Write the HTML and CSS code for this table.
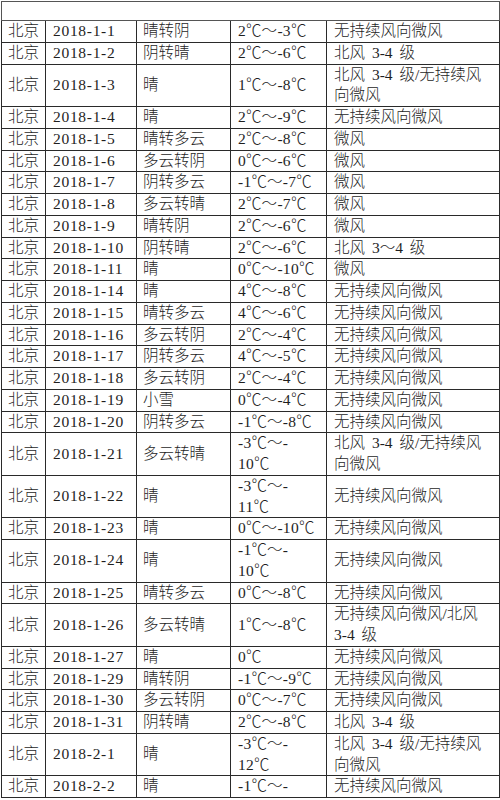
FILE: index.html
```html
<!DOCTYPE html>
<html lang="zh">
<head>
<meta charset="utf-8">
<title>北京天气</title>
<link rel="stylesheet" href="styles.css">
</head>
<body>
<div class="page">
<table class="weather">
<colgroup>
<col class="c-city"><col class="c-date"><col class="c-sky"><col class="c-temp"><col class="c-wind">
</colgroup>
<tr class="head"><td colspan="5"></td></tr>
<tr><td>北京</td><td class="date">2018-1-1</td><td>晴转阴</td><td class="temp">2<span class="deg">℃</span>～-3<span class="deg">℃</span></td><td class="wind">无持续风向微风</td></tr>
<tr><td>北京</td><td class="date">2018-1-2</td><td>阴转晴</td><td class="temp">2<span class="deg">℃</span>～-6<span class="deg">℃</span></td><td class="wind">北风 3-4 级</td></tr>
<tr><td>北京</td><td class="date">2018-1-3</td><td>晴</td><td class="temp">1<span class="deg">℃</span>～-8<span class="deg">℃</span></td><td class="wind">北风 3-4 级/无持续风<br>向微风</td></tr>
<tr><td>北京</td><td class="date">2018-1-4</td><td>晴</td><td class="temp">2<span class="deg">℃</span>～-9<span class="deg">℃</span></td><td class="wind">无持续风向微风</td></tr>
<tr><td>北京</td><td class="date">2018-1-5</td><td>晴转多云</td><td class="temp">2<span class="deg">℃</span>～-8<span class="deg">℃</span></td><td class="wind">微风</td></tr>
<tr><td>北京</td><td class="date">2018-1-6</td><td>多云转阴</td><td class="temp">0<span class="deg">℃</span>～-6<span class="deg">℃</span></td><td class="wind">微风</td></tr>
<tr><td>北京</td><td class="date">2018-1-7</td><td>阴转多云</td><td class="temp">-1<span class="deg">℃</span>～-7<span class="deg">℃</span></td><td class="wind">微风</td></tr>
<tr><td>北京</td><td class="date">2018-1-8</td><td>多云转晴</td><td class="temp">2<span class="deg">℃</span>～-7<span class="deg">℃</span></td><td class="wind">微风</td></tr>
<tr><td>北京</td><td class="date">2018-1-9</td><td>晴转阴</td><td class="temp">2<span class="deg">℃</span>～-6<span class="deg">℃</span></td><td class="wind">微风</td></tr>
<tr><td>北京</td><td class="date">2018-1-10</td><td>阴转晴</td><td class="temp">2<span class="deg">℃</span>～-6<span class="deg">℃</span></td><td class="wind">北风 3～4 级</td></tr>
<tr><td>北京</td><td class="date">2018-1-11</td><td>晴</td><td class="temp">0<span class="deg">℃</span>～-10<span class="deg">℃</span></td><td class="wind">微风</td></tr>
<tr><td>北京</td><td class="date">2018-1-14</td><td>晴</td><td class="temp">4<span class="deg">℃</span>～-8<span class="deg">℃</span></td><td class="wind">无持续风向微风</td></tr>
<tr><td>北京</td><td class="date">2018-1-15</td><td>晴转多云</td><td class="temp">4<span class="deg">℃</span>～-6<span class="deg">℃</span></td><td class="wind">无持续风向微风</td></tr>
<tr><td>北京</td><td class="date">2018-1-16</td><td>多云转阴</td><td class="temp">2<span class="deg">℃</span>～-4<span class="deg">℃</span></td><td class="wind">无持续风向微风</td></tr>
<tr><td>北京</td><td class="date">2018-1-17</td><td>阴转多云</td><td class="temp">4<span class="deg">℃</span>～-5<span class="deg">℃</span></td><td class="wind">无持续风向微风</td></tr>
<tr><td>北京</td><td class="date">2018-1-18</td><td>多云转阴</td><td class="temp">2<span class="deg">℃</span>～-4<span class="deg">℃</span></td><td class="wind">无持续风向微风</td></tr>
<tr><td>北京</td><td class="date">2018-1-19</td><td>小雪</td><td class="temp">0<span class="deg">℃</span>～-4<span class="deg">℃</span></td><td class="wind">无持续风向微风</td></tr>
<tr><td>北京</td><td class="date">2018-1-20</td><td>阴转多云</td><td class="temp">-1<span class="deg">℃</span>～-8<span class="deg">℃</span></td><td class="wind">无持续风向微风</td></tr>
<tr><td>北京</td><td class="date">2018-1-21</td><td>多云转晴</td><td class="temp">-3<span class="deg">℃</span>～-<br>10<span class="deg">℃</span></td><td class="wind">北风 3-4 级/无持续风<br>向微风</td></tr>
<tr><td>北京</td><td class="date">2018-1-22</td><td>晴</td><td class="temp">-3<span class="deg">℃</span>～-<br>11<span class="deg">℃</span></td><td class="wind">无持续风向微风</td></tr>
<tr><td>北京</td><td class="date">2018-1-23</td><td>晴</td><td class="temp">0<span class="deg">℃</span>～-10<span class="deg">℃</span></td><td class="wind">无持续风向微风</td></tr>
<tr><td>北京</td><td class="date">2018-1-24</td><td>晴</td><td class="temp">-1<span class="deg">℃</span>～-<br>10<span class="deg">℃</span></td><td class="wind">无持续风向微风</td></tr>
<tr><td>北京</td><td class="date">2018-1-25</td><td>晴转多云</td><td class="temp">0<span class="deg">℃</span>～-8<span class="deg">℃</span></td><td class="wind">无持续风向微风</td></tr>
<tr><td>北京</td><td class="date">2018-1-26</td><td>多云转晴</td><td class="temp">1<span class="deg">℃</span>～-8<span class="deg">℃</span></td><td class="wind">无持续风向微风/北风<br>3-4 级</td></tr>
<tr><td>北京</td><td class="date">2018-1-27</td><td>晴</td><td class="temp">0<span class="deg">℃</span></td><td class="wind">无持续风向微风</td></tr>
<tr><td>北京</td><td class="date">2018-1-29</td><td>晴转阴</td><td class="temp">-1<span class="deg">℃</span>～-9<span class="deg">℃</span></td><td class="wind">无持续风向微风</td></tr>
<tr><td>北京</td><td class="date">2018-1-30</td><td>多云转阴</td><td class="temp">0<span class="deg">℃</span>～-7<span class="deg">℃</span></td><td class="wind">无持续风向微风</td></tr>
<tr><td>北京</td><td class="date">2018-1-31</td><td>阴转晴</td><td class="temp">2<span class="deg">℃</span>～-8<span class="deg">℃</span></td><td class="wind">北风 3-4 级</td></tr>
<tr><td>北京</td><td class="date">2018-2-1</td><td>晴</td><td class="temp">-3<span class="deg">℃</span>～-<br>12<span class="deg">℃</span></td><td class="wind">北风 3-4 级/无持续风<br>向微风</td></tr>
<tr><td>北京</td><td class="date">2018-2-2</td><td>晴</td><td class="temp">-1<span class="deg">℃</span>～-</td><td class="wind">无持续风向微风</td></tr>
</table>
</div>
</body>
</html>
```
FILE: styles.css
```css
html, body {
  margin: 0;
  padding: 0;
  background: #ffffff;
}

.page {
  padding: 1px 0 0 1px;
}

.weather {
  border-collapse: collapse;
  table-layout: fixed;
  width: 498px;
  font-family: "Liberation Serif", "Noto Sans CJK SC", serif;
  font-size: 15.5px;
  font-weight: 300;
  color: #1e1e1e;
}

.c-city { width: 44px; }
.c-date { width: 91px; }
.c-sky { width: 94px; }
.c-temp { width: 96px; }
.c-wind { width: 173px; }

.weather td {
  border: 1px solid #2a2a2a;
  padding: 0 3px 0 6px;
  line-height: 20.75px;
  white-space: nowrap;
  vertical-align: middle;
  text-align: left;
}

.weather .head td {
  height: 18px;
  padding: 0;
  border-color: #555555;
}

.weather .date {
  letter-spacing: 0.7px;
  padding-left: 7px;
}

.weather .temp {
  letter-spacing: 0.3px;
  padding-left: 7px;
}

.weather .deg {
  font-family: "Noto Sans CJK SC", sans-serif;
  letter-spacing: 0;
  line-height: 0;
}

.weather .wind {
  word-spacing: 3px;
  padding-left: 7px;
}
```
